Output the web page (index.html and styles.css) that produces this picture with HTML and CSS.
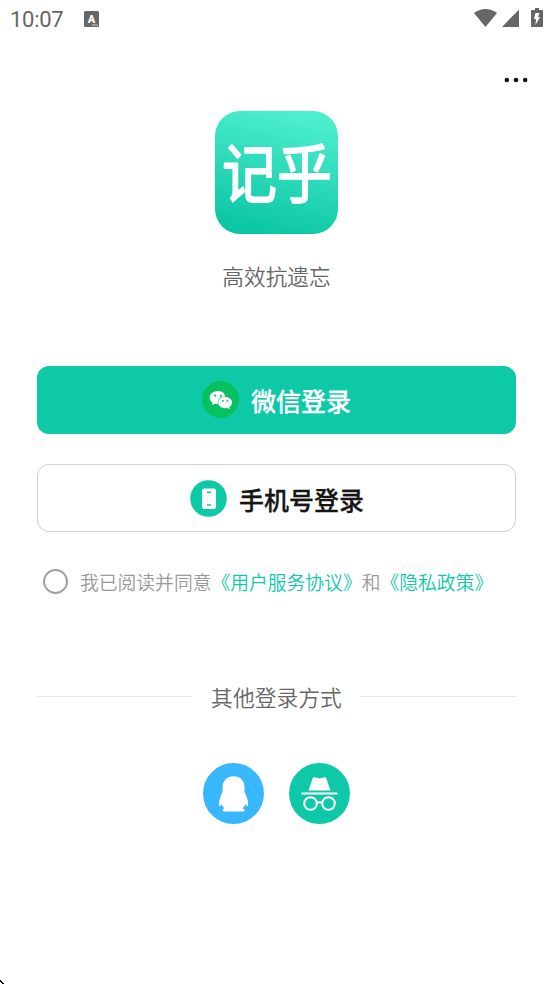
FILE: index.html
```html
<!DOCTYPE html>
<html lang="zh-CN">
<head>
<meta charset="utf-8">
<title>登录</title>
<link rel="stylesheet" href="styles.css">
</head>
<body>
<header class="status">
  <span class="time">10:07</span>
  <svg class="ime" width="16" height="16" viewBox="0 0 16 16"><rect width="15" height="16" rx="1.5" fill="#666"/><text x="7.4" y="11.5" text-anchor="middle" class="ime-letter">A</text><path d="M8 14h1.5M10.3 14h1.4M12.4 14h1.2" stroke="#fff"/></svg>
  <svg class="signals" width="70" height="22" viewBox="0 0 70 22" fill="#666">
    <path d="M0 5Q11.5-3 23 5L11.5 19Z"/>
    <path d="M28 19L45 1.500V19Z"/>
    <path d="M61 0h4v2h3q1 0 1 1v15q0 1-1 1H58q-1 0-1-1V3q0-1 1-1h3z"/>
    <path d="M61.500 5h4l-1.500 4h2l-4.500 8 .5-6h-2z" fill="#fff"/>
  </svg>
</header>
<nav class="toolbar"><svg width="24" height="6" viewBox="0 0 24 6" fill="#111"><circle cx="2.800" cy="3" r="2.300"/><circle cx="12" cy="3" r="2.300"/><circle cx="21.200" cy="3" r="2.300"/></svg></nav>
<main>
  <svg class="logo" width="123" height="123" viewBox="0 0 123 123">
    <defs><linearGradient id="mint" x1=".62" y1="0" x2=".38" y2="1"><stop stop-color="#4eefcf"/><stop offset="1" stop-color="#0bc5a4"/></linearGradient></defs>
    <rect width="123" height="123" rx="25" fill="url(#mint)"/>
    <text class="logo-text" transform="translate(7 86) scale(1 1.150)">记乎</text>
  </svg>
  <p class="slogan">高效抗遗忘</p>
  <button class="login wechat">
    <svg width="37" height="37" viewBox="0 0 37 37">
      <circle cx="18.500" cy="18.500" r="18.500" fill="#07c160"/>
      <path fill="#fff" d="M16 10c-5 0-8.300 3-8.300 6.600 0 2.200 1.100 4 3 5.100L9.900 24.200l3-1.500 3 .5C14.900 18.500 18.300 15.300 23.400 15.400 22.600 12.200 19.700 10 16 10z"/>
      <path fill="#fff" d="M23.200 15.900c-4 0-7 2.600-7 5.700s3 5.700 7 5.700l2.300-.3 2.300 1.300-.6-2.200c1.800-1.100 2.900-2.600 2.900-4.500 0-3.100-3-5.700-6.900-5.700z"/>
      <g fill="#07c160"><circle cx="13.200" cy="14.700" r="1.100"/><circle cx="18.800" cy="14.700" r="1.100"/><circle cx="20.900" cy="20" r=".9"/><circle cx="25.500" cy="20" r=".9"/></g>
    </svg>
    <span>微信登录</span>
  </button>
  <button class="login phone">
    <svg width="37" height="37" viewBox="0 0 37 37"><circle cx="18.500" cy="18.500" r="18.300" fill="#0ec9a8"/><rect x="12" y="8.500" width="14" height="20.500" rx="2.500" fill="#fff"/><path d="M17 12.200h4M17 25h4" stroke="#0ec9a8" stroke-width="1.500"/></svg>
    <span>手机号登录</span>
  </button>
  <div class="agreement"><i class="check"></i><span>我已阅读并同意<a>《用户服务协议》</a>和<a>《隐私政策》</a></span></div>
  <div class="divider"><span>其他登录方式</span></div>
  <div class="others">
    <svg width="61" height="61" viewBox="0 0 61 61"><circle cx="30.500" cy="30.500" r="30.500" fill="#38b7fc"/><path fill="#fff" d="M30.600 13.300c-7 0-11 4.800-11 11.200v4.500c-2 4-3.800 8.500-3.700 12.500 0 2.200.9 2.300 2.900-.3.500 1.600 1.400 3 2.600 4.100-1 .6-1.700 1-1.700 1.900 0 1 1 1.300 3 1.300h15.800c2 0 3-.3 3-1.300 0-.9-.8-1.400-1.800-1.900 1.200-1.100 2.100-2.500 2.600-4.100 2 2.600 2.900 2.500 2.900.3.100-4-1.700-8.500-3.700-12.500v-4.500c0-6.400-4-11.200-10.900-11.200z"/></svg>
    <svg width="61" height="61" viewBox="0 0 61 61"><circle cx="30.500" cy="30.500" r="30.500" fill="#0ec9a8"/><path fill="#fff" d="M19.500 27.500L23.700 15.200q.5-1.300 1.800-1l2.700.9q2.300.8 4.600 0l2.700-.9q1.300-.3 1.800 1L41.500 27.500zM12.500 29.400h36v2h-36z"/><g fill="none" stroke="#fff" stroke-width="2"><circle cx="21.500" cy="40.500" r="6.300"/><circle cx="39.500" cy="40.500" r="6.300"/><path d="M27.800 39.800q2.700-1.300 5.400 0"/></g></svg>
  </div>
</main>
<svg class="corner" width="4" height="4" viewBox="0 0 4 4"><path d="M0 0h1v1h1v1h1v1h1v1H2V3H1V2H0z"/></svg>
</body>
</html>
```
FILE: styles.css
```css
* { box-sizing: border-box; }
body {
  margin: 0;
  height: 984px;
  overflow: hidden;
  position: relative;
  background: #fff;
  font-family: "Noto Sans CJK SC", sans-serif;
  font-weight: 350;
  color: #666;
}
svg { display: block; flex: none; }
.status { height: 36px; padding: 0 9px 0 10px; display: flex; align-items: center; }
.time { font: 22px/22px Roboto, sans-serif; width: 74px; padding-top: 3px; letter-spacing: -.3px; }
.ime { margin-top: 1px; }
.ime-letter { font: 900 11px Roboto, sans-serif; fill: #fff; }
.signals { margin: 2px 0 0 auto; }
.toolbar { height: 75px; padding: 41px 25px 0 0; display: flex; justify-content: flex-end; }
main { padding: 0 37px; }
.logo { margin: 0 auto; }
.logo-text { font-family: "Noto Sans CJK SC", sans-serif; font-size: 55px; font-weight: 400; fill: #fff; stroke: #fff; stroke-width: 1.6px; stroke-linejoin: round; }
.slogan { margin: 26px 0 0; height: 32px; line-height: 31px; font-size: 21.700px; text-align: center; }
.login {
  width: 100%;
  height: 68px;
  padding: 0 0 1px;
  border: 0;
  border-radius: 12px;
  display: flex;
  align-items: center;
  justify-content: center;
  gap: 12px;
  font: 500 25px/36px "Noto Sans CJK SC", sans-serif;
  -webkit-text-stroke: .3px currentColor;
}
.login span { padding-top: 1px; }
.wechat { margin-top: 74px; background: #0ec9a8; color: #fff; }
.phone { margin-top: 30px; padding: 0 0 0 1px; background: #fff; border: 1.500px solid #d0d0d4; color: #151515; }
.agreement {
  margin: 36px 0 0 6px;
  height: 27px;
  display: flex;
  align-items: center;
  gap: 12px;
  font-size: 18.800px;
  line-height: 27px;
  color: #999;
  white-space: nowrap;
}
.agreement span { margin-top: -1px; }
.agreement a { color: #0ec9a8; }
.check { width: 25px; height: 25px; flex: none; border: 2px solid #a0a0a0; border-radius: 50%; }
.divider { margin-top: 85px; height: 32px; display: flex; align-items: center; gap: 19px; font-size: 21.800px; line-height: 32px; }
.divider span { padding-top: 1px; }
.divider::before, .divider::after { content: ""; flex: 1; height: 1px; background: #e8e8e8; }
.others { margin-top: 51px; display: flex; justify-content: center; gap: 25px; }
.corner { position: absolute; left: 0; bottom: 0; }
```
